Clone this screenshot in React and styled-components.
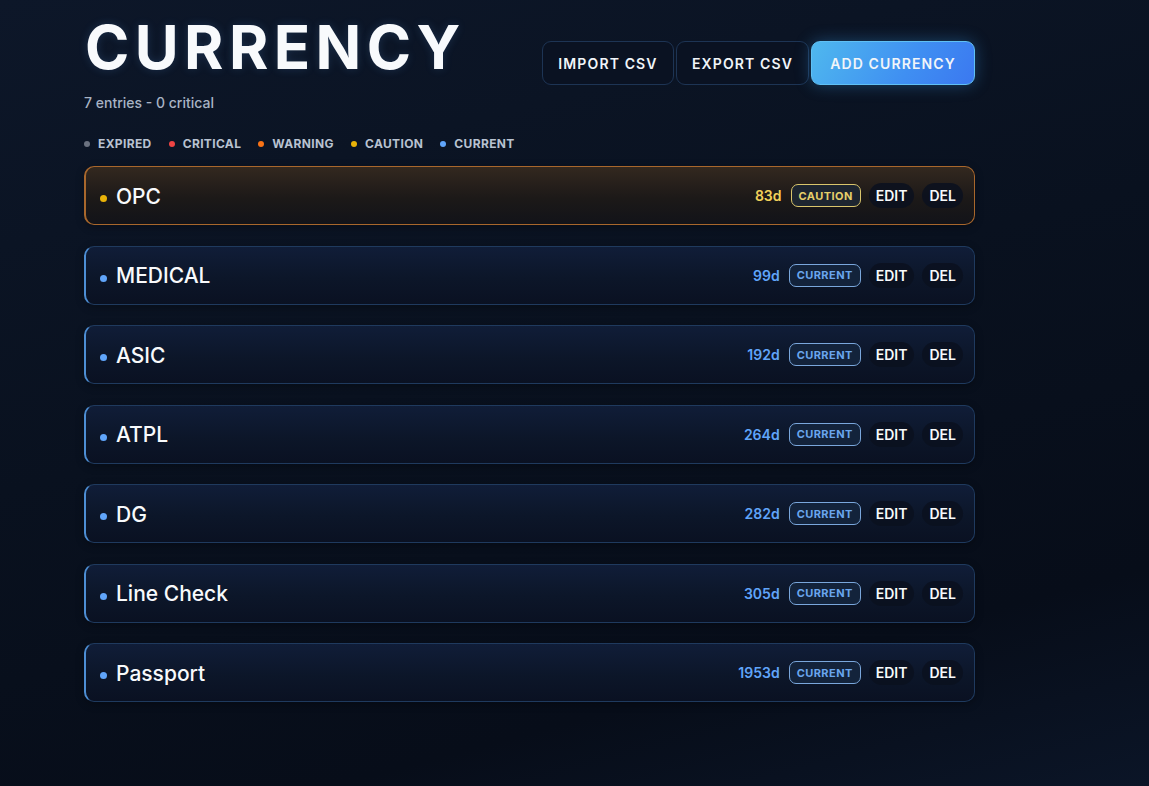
import React from "react";
import styled, { createGlobalStyle } from "styled-components";

const GlobalStyle = createGlobalStyle`
  html, body {
    margin: 0;
    padding: 0;
    background: #0a1222;
  }
  body {
    font-family: Inter, "Noto Sans", sans-serif;
    color: #f8fafc;
  }
`;

const tones = {
  expired: { dot: "#6b7280", text: "#9ca3af", border: "#6b7280" },
  critical: { dot: "#ef4444", text: "#f87171", border: "#ef4444" },
  warning: { dot: "#f97316", text: "#fb923c", border: "#f97316" },
  caution: { dot: "#eab308", text: "#f2d15a", border: "#d9c56c", badgeBg: "#1d2530", row: "#a8672c" },
  current: { dot: "#60a5fa", text: "#60a5fa", border: "#7aa7dc", badgeBg: "#13233b", row: "#1f3a5e" },
};

const Page = styled.div`
  min-height: 786px;
  box-sizing: border-box;
  padding: 17px 0 0 84px;
  background: linear-gradient(165deg, #0d1729 0%, #09111f 45%, #070d19 80%, #0b1527 100%);
`;

const Main = styled.div`
  width: 891px;
`;

const Header = styled.div`
  display: flex;
  justify-content: space-between;
  align-items: flex-start;
`;

const TitleBlock = styled.div`
  display: flex;
  flex-direction: column;
`;

const Title = styled.h1`
  margin: 0 0 0 1px;
  font-size: 60px;
  line-height: 1;
  font-weight: 700;
  letter-spacing: 0.09em;
  color: #f8fafc;
  text-shadow: 0 0 10px rgba(96, 165, 250, 0.18);
`;

const Subtitle = styled.div`
  margin-top: 17px;
  font-size: 14px;
  font-weight: 500;
  color: #a8b3c4;
`;

const Legend = styled.div`
  display: flex;
  gap: 17px;
  margin-top: 25px;
`;

const LegendItem = styled.span`
  display: flex;
  align-items: center;
  gap: 8px;
  font-size: 12px;
  font-weight: 700;
  letter-spacing: 0.03em;
  color: #b8c2d1;
`;

const Dot = styled.span`
  width: ${(p) => p.$size || 6}px;
  height: ${(p) => p.$size || 6}px;
  border-radius: 50%;
  background: ${(p) => p.$color};
  flex-shrink: 0;
  margin-top: ${(p) => p.$drop || 0}px;
`;

const Actions = styled.div`
  display: flex;
  gap: 2px;
  margin-top: 24px;
`;

const HeadButton = styled.button`
  height: 44px;
  padding: 0;
  border-radius: 9px;
  font-family: inherit;
  font-size: 14px;
  font-weight: 600;
  letter-spacing: 0.08em;
  cursor: pointer;
  color: #f1f5f9;
  border: 1px solid ${(p) => (p.$primary ? "#60c0f4" : "#1d3454")};
  background: ${(p) =>
    p.$primary ? "linear-gradient(120deg, #4fb8ee 0%, #3f8ff2 60%, #3b78f0 100%)" : "#0a1222"};
  box-shadow: ${(p) => (p.$primary ? "0 0 16px rgba(56, 160, 240, 0.35)" : "none")};
  width: ${(p) => p.$w}px;
`;

const List = styled.div`
  display: flex;
  flex-direction: column;
  gap: 20.5px;
  margin-top: 15px;
`;

const Row = styled.div`
  height: 59px;
  box-sizing: border-box;
  display: flex;
  align-items: center;
  padding: 0 11px 0 14px;
  border-radius: 10px;
  border: 1px solid ${(p) => tones[p.$tone].row};
  border-left: 2px solid ${(p) => (p.$tone === "current" ? "#4d8ed4" : tones[p.$tone].row)};
  background: ${(p) =>
    p.$tone === "caution"
      ? "linear-gradient(180deg, #33281f 0%, #1c1918 55%, #121319 100%)"
      : "linear-gradient(180deg, #101d38 0%, #0c1629 55%, #0a1122 100%)"};
  box-shadow: 0 2px 8px rgba(0, 0, 0, 0.3);
`;

const Name = styled.span`
  margin-left: 9px;
  margin-top: 1px;
  font-size: 21px;
  font-weight: 500;
  color: #f8fafc;
  flex: 1;
`;

const Days = styled.span`
  font-size: 14px;
  font-weight: 600;
  color: ${(p) => tones[p.$tone].text};
  margin-right: 9px;
`;

const Badge = styled.span`
  height: 23px;
  box-sizing: border-box;
  display: inline-flex;
  align-items: center;
  padding: 0 7px;
  border-radius: 7px;
  border: 1.5px solid ${(p) => tones[p.$tone].border};
  background: ${(p) => tones[p.$tone].badgeBg};
  color: ${(p) => (p.$tone === "caution" ? "#e6cf6a" : "#6aa6ee")};
  font-size: 11px;
  font-weight: 700;
  letter-spacing: 0.04em;
  margin-right: 8px;
`;

const RowButton = styled.button`
  padding: 4px 7px;
  border: none;
  border-radius: 999px;
  background: rgba(10, 16, 30, 0.85);
  color: #f8fafc;
  font-family: inherit;
  font-size: 14px;
  font-weight: 600;
  cursor: pointer;
  & + & {
    margin-left: 8px;
  }
`;

const legend = ["expired", "critical", "warning", "caution", "current"];

const entries = [
  { name: "OPC", days: 83, tone: "caution" },
  { name: "MEDICAL", days: 99, tone: "current" },
  { name: "ASIC", days: 192, tone: "current" },
  { name: "ATPL", days: 264, tone: "current" },
  { name: "DG", days: 282, tone: "current" },
  { name: "Line Check", days: 305, tone: "current" },
  { name: "Passport", days: 1953, tone: "current" },
];

export default function App() {
  return (
    <>
      <GlobalStyle />
      <Page>
        <Main>
          <Header>
            <TitleBlock>
              <Title>CURRENCY</Title>
              <Subtitle>7 entries - 0 critical</Subtitle>
              <Legend>
                {legend.map((t) => (
                  <LegendItem key={t}>
                    <Dot $color={tones[t].dot} />
                    {t.toUpperCase()}
                  </LegendItem>
                ))}
              </Legend>
            </TitleBlock>
            <Actions>
              <HeadButton $w={132}>IMPORT CSV</HeadButton>
              <HeadButton $w={133}>EXPORT CSV</HeadButton>
              <HeadButton $w={164} $primary>ADD CURRENCY</HeadButton>
            </Actions>
          </Header>
          <List>
            {entries.map((e) => (
              <Row key={e.name} $tone={e.tone}>
                <Dot $color={tones[e.tone].dot} $size={7} $drop={6} />
                <Name>{e.name}</Name>
                <Days $tone={e.tone}>{e.days}d</Days>
                <Badge $tone={e.tone}>{e.tone.toUpperCase()}</Badge>
                <RowButton>EDIT</RowButton>
                <RowButton>DEL</RowButton>
              </Row>
            ))}
          </List>
        </Main>
      </Page>
    </>
  );
}
